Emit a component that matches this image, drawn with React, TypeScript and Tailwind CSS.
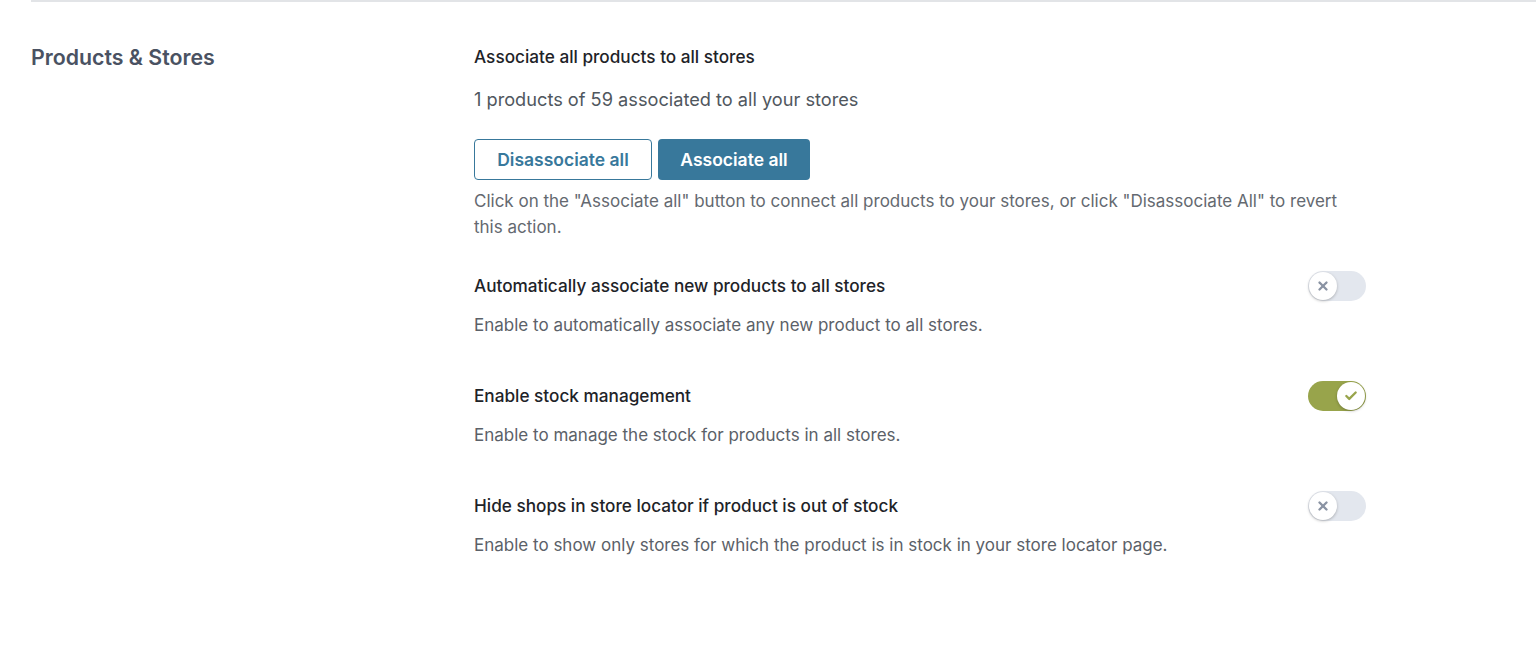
import React, { useState } from 'react';
import { X, Check } from 'lucide-react';

const font = { fontFamily: 'Inter, "Noto Sans", sans-serif' };

function Toggle({ on, onChange }: { on: boolean; onChange: () => void }) {
  return (
    <button
      onClick={onChange}
      className={`relative h-[30px] w-[58px] shrink-0 rounded-full transition-colors ${on ? 'bg-[#98a44b]' : 'bg-[#e3e7ee]'}`}
    >
      <span
        className={`absolute top-[1px] flex h-[28px] w-[28px] items-center justify-center rounded-full bg-white shadow-[0_1px_3px_rgba(0,0,0,0.25)] transition-all ${on ? 'left-[29px]' : 'left-[1px]'}`}
      >
        {on ? (
          <Check size={14} strokeWidth={4} className="text-[#98a44b]" />
        ) : (
          <X size={14} strokeWidth={4} className="text-[#8a93a3]" />
        )}
      </span>
    </button>
  );
}

function SettingRow({
  title,
  desc,
  on,
  onChange,
  className,
}: {
  title: string;
  desc: string;
  on: boolean;
  onChange: () => void;
  className: string;
}) {
  return (
    <div className={className}>
      <div className="flex h-[30px] items-center justify-between">
        <span className="text-[17.2px] font-medium text-[#1e2328]">{title}</span>
        <Toggle on={on} onChange={onChange} />
      </div>
      <p className="mt-[12px] text-[17px] leading-[24px] text-[#5b6168]">{desc}</p>
    </div>
  );
}

export default function App() {
  const [autoAssoc, setAutoAssoc] = useState(false);
  const [stock, setStock] = useState(true);
  const [hideShops, setHideShops] = useState(false);

  return (
    <div className="min-h-[660px] bg-white pl-[31px]" style={font}>
      <div className="border-t-2 border-[#e2e4e7] pt-[43px]">
        <div className="flex">
          <div className="w-[443px] shrink-0">
            <h2 className="text-[21.3px] font-semibold leading-[24px] text-[#4a5262]">Products &amp; Stores</h2>
          </div>
          <div className="w-[892px]">
            <h3 className="text-[17.2px] font-medium leading-[24px] text-[#1e2328]">Associate all products to all stores</h3>
            <p className="mt-[17px] text-[18.2px] leading-[26px] text-[#50575e]">1 products of 59 associated to all your stores</p>
            <div className="mt-[27px] flex gap-[6px]">
              <button className="h-[41px] w-[178px] rounded-[4px] border border-[#38789b] bg-white pt-[2px] text-[17.5px] font-semibold text-[#38789b]">
                Disassociate all
              </button>
              <button className="h-[41px] w-[152px] rounded-[4px] bg-[#38789b] pt-[2px] text-[17.5px] font-semibold text-white">
                Associate all
              </button>
            </div>
            <p className="mt-[8px] text-[17px] leading-[26px] text-[#646970]">
              Click on the "Associate all" button to connect all products to your stores, or click "Disassociate All" to revert this action.
            </p>
            <SettingRow
              className="mt-[31px]"
              title="Automatically associate new products to all stores"
              desc="Enable to automatically associate any new product to all stores."
              on={autoAssoc}
              onChange={() => setAutoAssoc(!autoAssoc)}
            />
            <SettingRow
              className="mt-[44px]"
              title="Enable stock management"
              desc="Enable to manage the stock for products in all stores."
              on={stock}
              onChange={() => setStock(!stock)}
            />
            <SettingRow
              className="mt-[44px]"
              title="Hide shops in store locator if product is out of stock"
              desc="Enable to show only stores for which the product is in stock in your store locator page."
              on={hideShops}
              onChange={() => setHideShops(!hideShops)}
            />
          </div>
        </div>
      </div>
    </div>
  );
}
